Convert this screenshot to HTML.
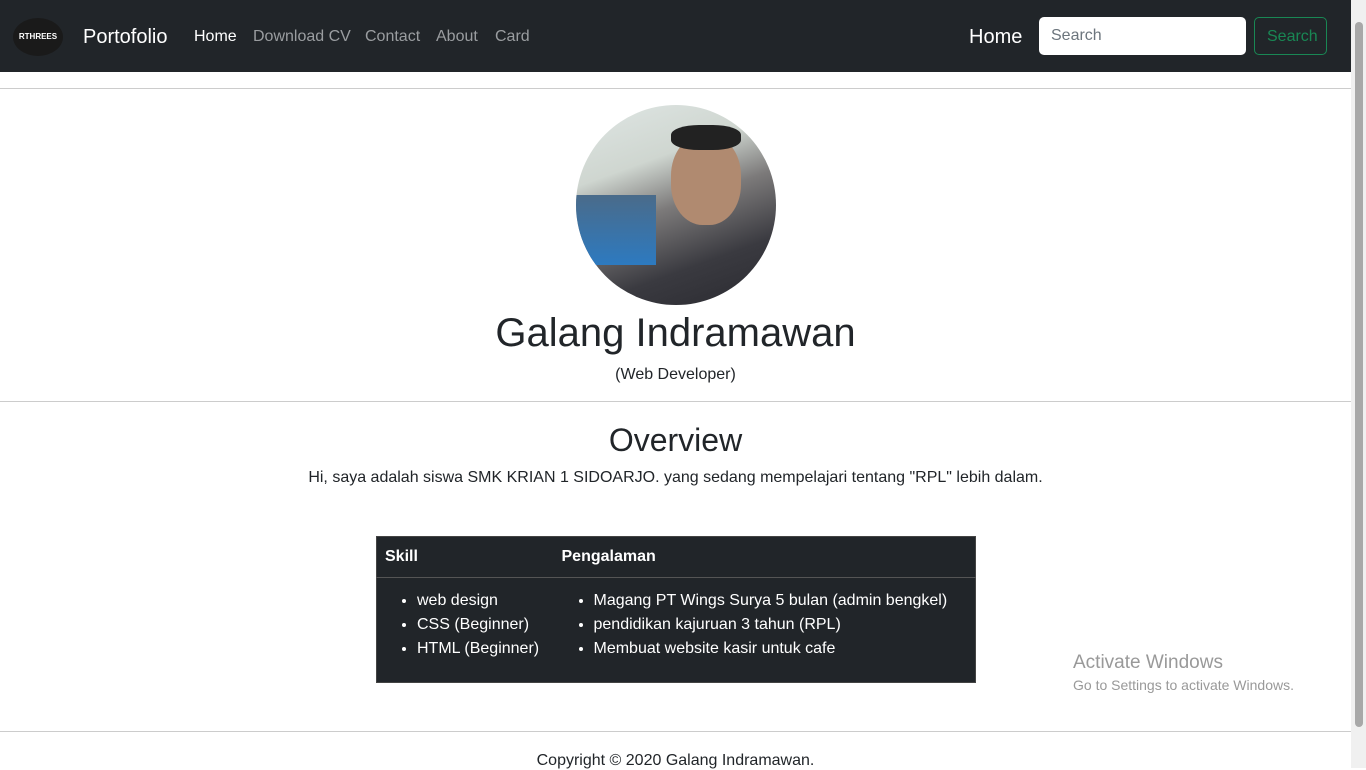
<!DOCTYPE html>
<html><head><meta charset="utf-8"><style>
*{box-sizing:border-box;margin:0;padding:0}
body{width:1366px;height:768px;overflow:hidden;font-family:"Liberation Sans",sans-serif;color:#212529;background:#fff;position:relative}
.nav{position:absolute;left:0;top:0;width:1351px;height:72px;background:#212529}
.nav span{position:absolute;top:28px;font-size:16px;color:#9a9da0}
.sb{position:absolute;right:0;top:0;width:15px;height:768px;background:#f0f0f0}
.sb div{position:absolute;left:4px;top:22px;width:8px;height:705px;background:#a8a8a8;border-radius:4px}
hr{position:absolute;left:0;width:1351px;border:0;border-top:1px solid #ccc}
.c{position:absolute;left:0;width:1351px;text-align:center}
table{position:absolute;left:376px;top:536px;width:600px;height:147px;background:#212529;color:#fff;border:1px solid #444;border-collapse:collapse;font-size:16px}
</style></head><body>
<div class="nav">
<div style="position:absolute;left:13px;top:18px;width:50px;height:38px;border-radius:50%;background:#1a1a1a;color:#fff;font-size:8px;font-weight:bold;line-height:38px;text-align:center">RTHREES</div>
<span style="left:83px;top:26px;font-size:20px;color:#fff">Portofolio</span>
<span style="left:194px;color:#fff">Home</span>
<span style="left:253px">Download CV</span>
<span style="left:365px">Contact</span>
<span style="left:436px">About</span>
<span style="left:495px">Card</span>
<span style="left:969px;top:26px;font-size:20px;color:#fff">Home</span>
<div style="position:absolute;left:1039px;top:17px;width:207px;height:38px;background:#fff;border-radius:5px;padding:10px 12px;color:#6c757d;font-size:16px">Search</div>
<div style="position:absolute;left:1254px;top:17px;width:73px;height:38px;border:1px solid #198754;border-radius:5px;padding:10px 12px;color:#198754;font-size:16px">Search</div>
</div>
<hr style="top:88px">
<div style="position:absolute;left:576px;top:105px;width:200px;height:200px;border-radius:50%;overflow:hidden;background:linear-gradient(160deg,#dfe6e4 0%,#cfd6d0 30%,#7c7a7a 50%,#3a3a40 75%,#2a2a30 100%)">
<div style="position:absolute;left:0;top:90px;width:80px;height:70px;background:linear-gradient(#4a6b8a,#2d7ac0)"></div>
<div style="position:absolute;left:95px;top:30px;width:70px;height:90px;border-radius:45%;background:#b08a70"></div>
<div style="position:absolute;left:95px;top:20px;width:70px;height:25px;border-radius:40%;background:#222"></div>
</div>
<div class="c" style="top:311px;font-size:40px;font-weight:500">Galang Indramawan</div>
<div class="c" style="top:366px;font-size:16px">(Web Developer)</div>
<hr style="top:401px">
<div class="c" style="top:422px;font-size:32px;font-weight:500">Overview</div>
<div class="c" style="top:469px;font-size:16px">Hi, saya adalah siswa SMK KRIAN 1 SIDOARJO. yang sedang mempelajari tentang "RPL" lebih dalam.</div>
<table>
<tr style="height:41px;border-bottom:1px solid #555"><th style="text-align:left;padding-left:8px;width:185px">Skill</th><th style="text-align:left">Pengalaman</th></tr>
<tr><td style="vertical-align:top;padding:11px 0 0 40px;line-height:24px"><ul><li>web design</li><li>CSS (Beginner)</li><li>HTML (Beginner)</li></ul></td>
<td style="vertical-align:top;padding:11px 0 0 32px;line-height:24px"><ul><li>Magang PT Wings Surya 5 bulan (admin bengkel)</li><li>pendidikan kajuruan 3 tahun (RPL)</li><li>Membuat website kasir untuk cafe</li></ul></td></tr>
</table>
<div style="position:absolute;left:1073px;top:652px;color:#999;font-size:19px">Activate Windows</div>
<div style="position:absolute;left:1073px;top:677px;color:#999;font-size:14px">Go to Settings to activate Windows.</div>
<hr style="top:731px">
<div class="c" style="top:752px;font-size:16px">Copyright © 2020 Galang Indramawan.</div>
<div class="sb"><div></div></div>
</body></html>
